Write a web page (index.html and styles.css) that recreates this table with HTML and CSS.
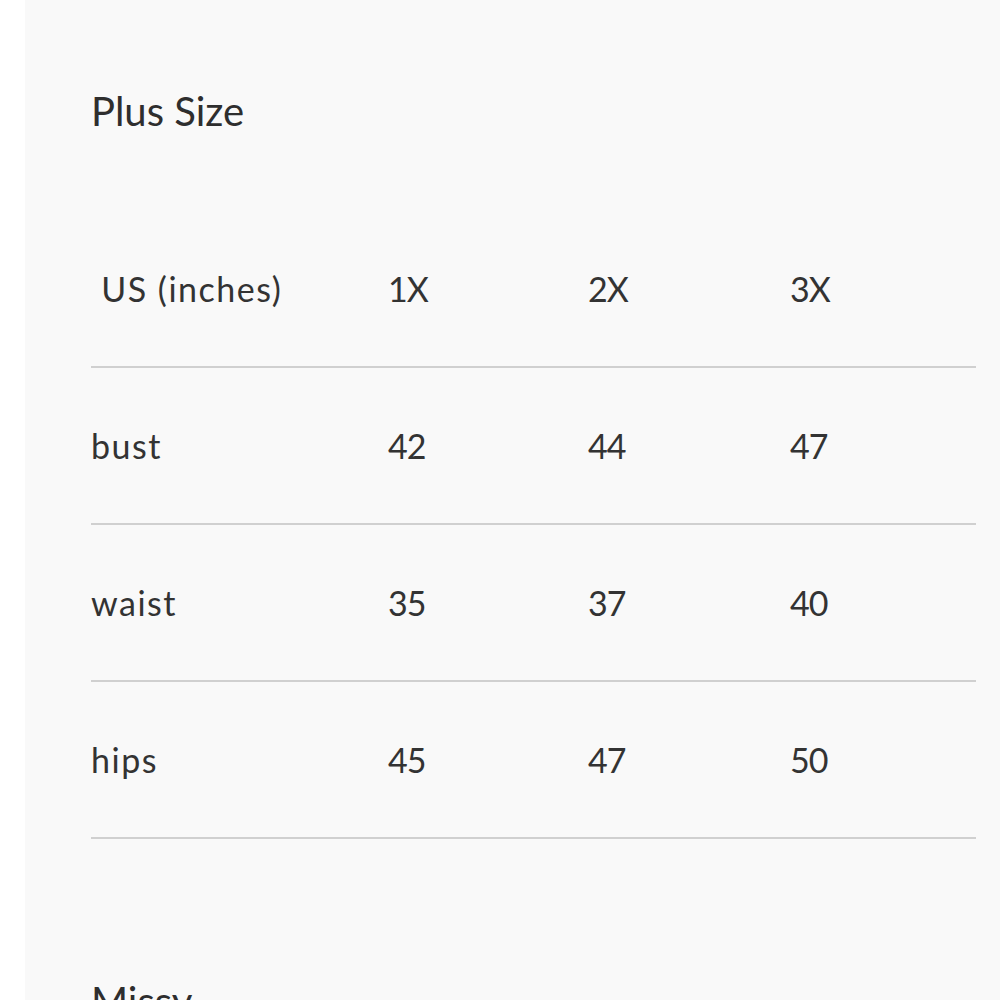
FILE: index.html
```html
<!DOCTYPE html>
<html>
<head>
<meta charset="utf-8">
<link rel="stylesheet" href="styles.css">
</head>
<body>
<div class="panel">
  <h2 class="title">Plus Size</h2>
  <div class="table">
    <div class="row head">
      <div class="cell first">&nbsp;US (inches)</div>
      <div class="cell">1X</div>
      <div class="cell">2X</div>
      <div class="cell">3X</div>
    </div>
    <div class="row">
      <div class="cell first">bust</div>
      <div class="cell">42</div>
      <div class="cell">44</div>
      <div class="cell">47</div>
    </div>
    <div class="row">
      <div class="cell first">waist</div>
      <div class="cell">35</div>
      <div class="cell">37</div>
      <div class="cell">40</div>
    </div>
    <div class="row">
      <div class="cell first">hips</div>
      <div class="cell">45</div>
      <div class="cell">47</div>
      <div class="cell">50</div>
    </div>
  </div>
  <h2 class="title next">Missy</h2>
</div>
</body>
</html>
```
FILE: styles.css
```css
html, body {
  margin: 0;
  padding: 0;
  background: #ffffff;
}
body {
  font-family: "Lato", "Noto Sans", sans-serif;
  color: #333333;
  overflow: hidden;
  height: 1000px;
}
.panel {
  margin-left: 25px;
  background: #f9f9f9;
  padding: 87px 24px 0 66px;
  min-height: 1000px;
  box-sizing: border-box;
}
.title {
  margin: 0;
  font-size: 40px;
  line-height: 48px;
  font-weight: 400;
  color: #2e2e2e;
}
.title.next {
  margin-top: 138px;
}
.table {
  margin-top: 76px;
}
.row {
  display: grid;
  grid-template-columns: 297px 200px 202px 1fr;
  align-items: center;
  height: 157px;
  box-sizing: border-box;
  border-bottom: 2px solid #d0d0d0;
  font-size: 34px;
}
.cell {
  white-space: pre;
  letter-spacing: -1px;
}
.cell.first {
  letter-spacing: 1.5px;
}
```
